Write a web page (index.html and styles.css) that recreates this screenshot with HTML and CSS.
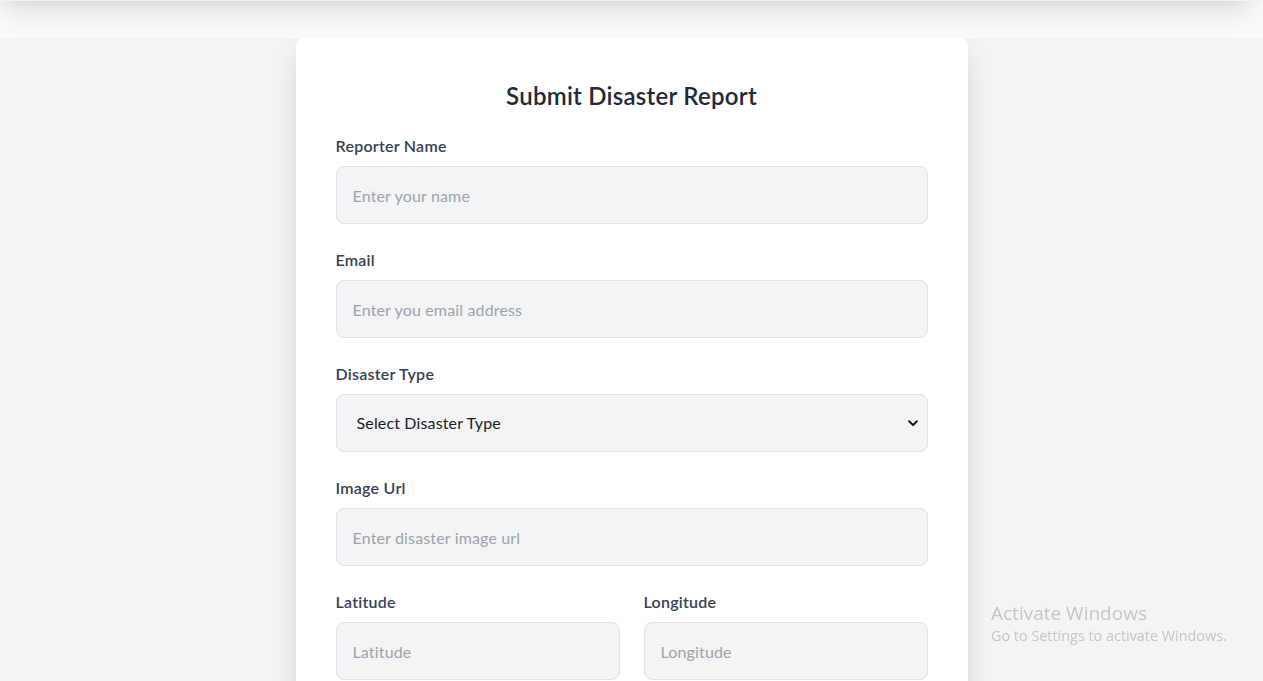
FILE: index.html
```html
<!DOCTYPE html>
<html lang="en">
<head>
<meta charset="utf-8">
<title>Submit Disaster Report</title>
<link rel="stylesheet" href="styles.css">
</head>
<body>
<header class="topbar"></header>
<main class="page">
  <form class="card">
    <h1 class="title">Submit Disaster Report</h1>
    <div class="field">
      <label class="label" for="name">Reporter Name</label>
      <input class="input" id="name" type="text" placeholder="Enter your name">
    </div>
    <div class="field">
      <label class="label" for="email">Email</label>
      <input class="input" id="email" type="email" placeholder="Enter you email address">
    </div>
    <div class="field">
      <label class="label" for="type">Disaster Type</label>
      <div class="select-wrap">
        <select class="input select" id="type">
          <option>Select Disaster Type</option>
          <option>Flood</option>
          <option>Earthquake</option>
          <option>Fire</option>
        </select>
        <svg class="chevron" viewBox="0 0 10 7" width="10" height="7"><path d="M1.2 1.3 L5 5.1 L8.8 1.3" fill="none" stroke="#111" stroke-width="2" stroke-linecap="round" stroke-linejoin="round"/></svg>
      </div>
    </div>
    <div class="field">
      <label class="label" for="img">Image Url</label>
      <input class="input" id="img" type="text" placeholder="Enter disaster image url">
    </div>
    <div class="row">
      <div class="field">
        <label class="label" for="lat">Latitude</label>
        <input class="input" id="lat" type="text" placeholder="Latitude">
      </div>
      <div class="field">
        <label class="label" for="lng">Longitude</label>
        <input class="input" id="lng" type="text" placeholder="Longitude">
      </div>
    </div>
    <div class="field">
      <label class="label" for="desc">Description</label>
      <textarea class="input" id="desc" rows="4" placeholder="Describe the disaster"></textarea>
    </div>
    <button class="submit" type="button">Submit Report</button>
  </form>
</main>
<div class="watermark">
  <div class="wm-title">Activate Windows</div>
  <div class="wm-sub">Go to Settings to activate Windows.</div>
</div>
</body>
</html>
```

FILE: styles.css
```css
* { box-sizing: border-box; }
html, body { margin: 0; padding: 0; }
body {
  font-family: Lato, "Open Sans", sans-serif;
  background: #f3f4f6;
  color: #1f2937;
  overflow: hidden;
}
.topbar {
  height: 38px;
  background: #fafafa;
  position: relative;
  overflow: hidden;
  border-top: 1px solid #f2f2f2;
}
.topbar::before {
  content: "";
  position: absolute;
  left: 4px;
  right: 14px;
  top: -60px;
  height: 60px;
  background: #fff;
  box-shadow: 0 10px 28px rgba(0,0,0,0.12), 0 4px 8px rgba(0,0,0,0.03);
}
.page {
  display: flex;
  justify-content: center;
  background: #f3f4f6;
  min-height: 700px;
}
.card {
  width: 672px;
  background: #fff;
  border-radius: 8px;
  padding: 40px;
  box-shadow: 0 20px 25px -5px rgba(0,0,0,0.1), 0 8px 30px rgba(0,0,0,0.07);
  display: flex;
  flex-direction: column;
  gap: 24px;
}
.title {
  margin: 0 0 -4px;
  font-size: 24px;
  line-height: 36px;
  font-weight: 600;
  letter-spacing: 0.25px;
  text-align: center;
  color: #1f2937;
}
.field {
  display: flex;
  flex-direction: column;
  gap: 8px;
}
.label {
  font-size: 16px;
  line-height: 24px;
  font-weight: 600;
  letter-spacing: 0.25px;
  color: #374151;
}
.input {
  font-family: inherit;
  font-size: 16px;
  line-height: 24px;
  font-weight: 400;
  letter-spacing: 0.15px;
  height: 58px;
  padding: 16px;
  border: 1px solid #dfe2e6;
  border-radius: 8px;
  background: #f3f4f6;
  color: #111827;
  width: 100%;
  outline: none;
}
.input::placeholder { color: #9ca3af; opacity: 1; }
textarea.input { height: auto; resize: none; }
.select-wrap { position: relative; }
.select {
  appearance: none;
  -webkit-appearance: none;
  padding-left: 20px;
  color: #222;
}
.chevron {
  position: absolute;
  right: 10px;
  top: 26px;
  pointer-events: none;
}
.row {
  display: grid;
  grid-template-columns: 1fr 1fr;
  gap: 24px;
}
.submit {
  font-family: inherit;
  font-size: 16px;
  font-weight: 600;
  padding: 14px;
  border: none;
  border-radius: 8px;
  background: #2563eb;
  color: #fff;
}
.watermark {
  position: fixed;
  left: 991px;
  top: 600px;
  color: #c4c5c7;
  font-family: "Open Sans", sans-serif;
  pointer-events: none;
}
.wm-title { font-size: 19px; line-height: 26px; }
.wm-sub { font-size: 14.4px; line-height: 20px; }
```
